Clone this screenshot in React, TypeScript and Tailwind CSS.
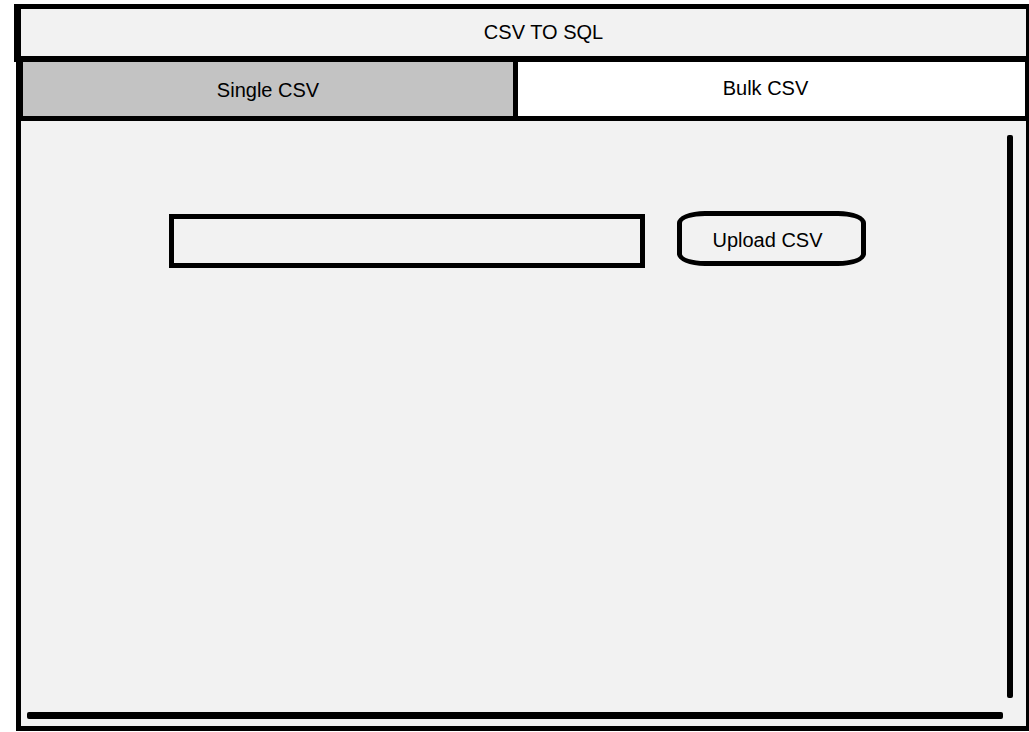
import { useState } from "react";

type Mode = "single" | "bulk";

export default function App() {
  const [mode, setMode] = useState<Mode>("bulk");
  const [fileName, setFileName] = useState("");

  return (
    <div className="flex min-h-screen flex-col bg-white pt-1 pb-px pl-[14px] font-['Liberation_Sans',Arial,sans-serif] text-xl text-black">
      <header className="flex h-[58px] items-center justify-center border-t-5 border-r-3 border-b-6 border-l-7 border-black bg-[#f2f2f2] pb-0.5 pl-10">
        <h1>CSV TO SQL</h1>
      </header>

      <div className="ml-0.5 flex flex-1 flex-col">
        <div
          role="tablist"
          aria-label="Conversion mode"
          className="grid h-[59px] grid-cols-[490fr_512fr] border-r-4 border-b-5 border-l-7 border-black"
        >
          <button
            type="button"
            role="tab"
            aria-selected={mode === "single"}
            onClick={() => setMode("single")}
            className="bg-[#c3c3c3] pt-0.5"
          >
            Single CSV
          </button>
          <button
            type="button"
            role="tab"
            aria-selected={mode === "bulk"}
            onClick={() => setMode("bulk")}
            className="border-l-5 border-black bg-white pr-3 pb-0.5"
          >
            Bulk CSV
          </button>
        </div>

        <main className="flex flex-1 flex-col border-r-3 border-b-5 border-l-5 border-black bg-[#f2f2f2] pt-[14px] pb-[7px] pl-1.5">
          <div className="flex flex-1 pr-[13px]">
            <form
              className="flex flex-1 items-start gap-8 pt-[76px] pr-[141px] pl-[142px]"
              onSubmit={(event) => event.preventDefault()}
            >
              <input
                type="text"
                aria-label="CSV file"
                value={fileName}
                onChange={(event) => setFileName(event.target.value)}
                className="mt-[3px] h-[54px] min-w-0 flex-1 border-5 border-black px-3 outline-none"
              />
              <button
                type="submit"
                className="h-[55px] w-[189px] rounded-[28px/12px] border-5 border-black pt-0.5 pr-2"
              >
                Upload CSV
              </button>
            </form>
            <div aria-hidden="true" className="mb-[14px] w-1.5 rounded-xs bg-black" />
          </div>
          <div aria-hidden="true" className="mr-[23px] h-[7px] rounded-xs bg-black" />
        </main>
      </div>
    </div>
  );
}
